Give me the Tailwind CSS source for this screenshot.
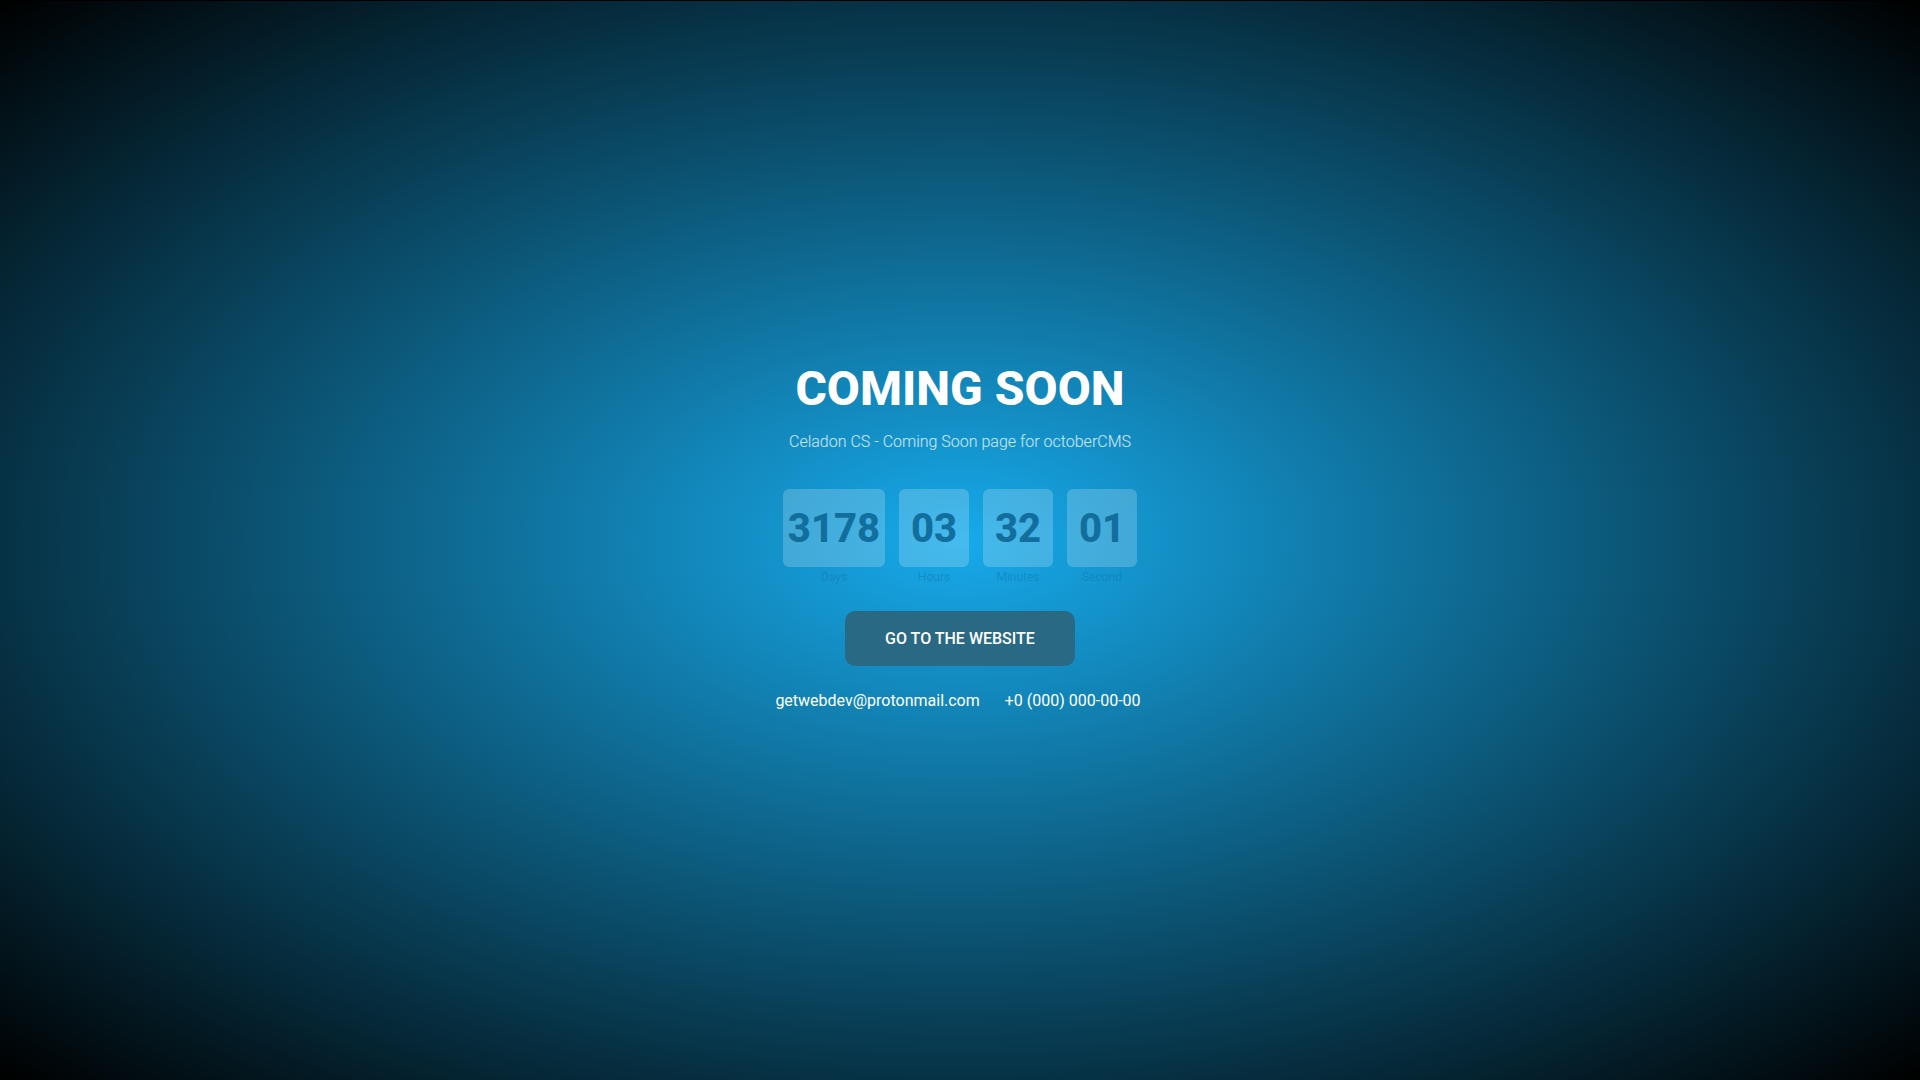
<!DOCTYPE html>
<html lang="en">
<head>
<meta charset="utf-8">
<title>Coming Soon</title>
<script src="https://cdn.jsdelivr.net/npm/@tailwindcss/browser@4"></script>
</head>
<body class="bg-black font-['Roboto',sans-serif] text-base text-white">
<main class="flex min-h-screen flex-col items-center justify-center border-t border-black bg-[radial-gradient(ellipse_at_center,#17aaeb_0%,#000_100%)] pb-[7px] text-center">
  <h1 class="text-5xl leading-[56px] font-extrabold">COMING SOON</h1>
  <p class="mt-[13px] leading-6 font-light text-white/80">Celadon CS - Coming Soon page for octoberCMS</p>
  <div class="mt-[35px] flex gap-3.5 text-[#126e9d]">
    <div><div class="flex h-[78px] w-[102px] items-center justify-center rounded-md bg-white/20 pt-0.5 text-[40px] font-extrabold">3178</div><div class="text-xs leading-5 text-[#126e9d]/40">Days</div></div>
    <div><div class="flex h-[78px] w-[70px] items-center justify-center rounded-md bg-white/20 pt-0.5 text-[40px] font-extrabold">03</div><div class="text-xs leading-5 text-[#126e9d]/40">Hours</div></div>
    <div><div class="flex h-[78px] w-[70px] items-center justify-center rounded-md bg-white/20 pt-0.5 text-[40px] font-extrabold">32</div><div class="text-xs leading-5 text-[#126e9d]/40">Minutes</div></div>
    <div><div class="flex h-[78px] w-[70px] items-center justify-center rounded-md bg-white/20 pt-0.5 text-[40px] font-extrabold">01</div><div class="text-xs leading-5 text-[#126e9d]/40">Second</div></div>
  </div>
  <a href="#" class="mt-6 rounded-[10px] bg-[#296983] px-10 py-4 leading-[23px] font-medium">GO TO THE WEBSITE</a>
  <div class="mt-[23px] flex gap-[25px] pr-1 leading-6">
    <a href="mailto:getwebdev@protonmail.com">getwebdev@protonmail.com</a>
    <a href="tel:+00000000000">+0 (000) 000-00-00</a>
  </div>
</main>
</body>
</html>
